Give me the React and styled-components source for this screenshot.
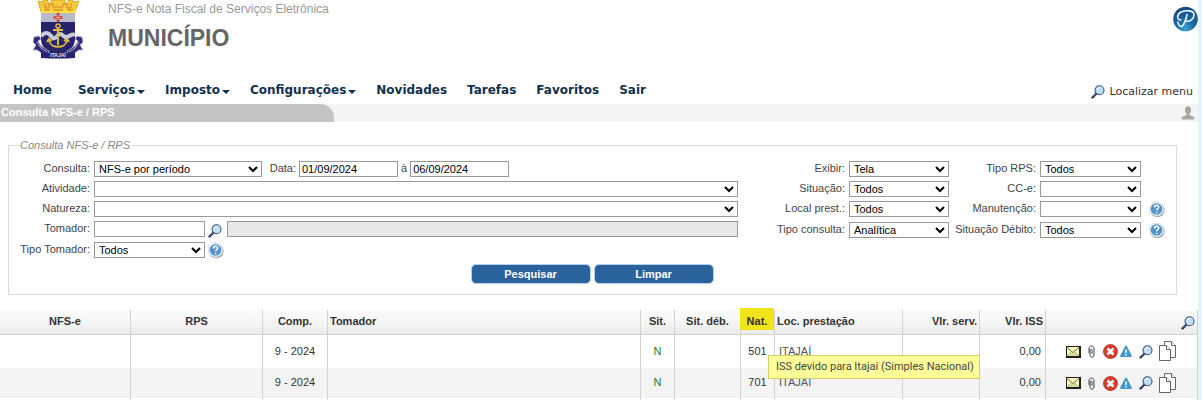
import React, { useState } from "react";
import styled, { createGlobalStyle } from "styled-components";

const GlobalStyle = createGlobalStyle`
  * {
    box-sizing: border-box;
  }

  body {
    margin: 0;
    background: #fff;
    color: #333;
    font-family: "Liberation Sans", Arial, sans-serif;
    font-size: 11px;
    line-height: 16px;
  }
`;

const Page = styled.div`
  height: 100vh;
  overflow: hidden;
  border-right: 4px solid #e3f4fe;
`;

const Header = styled.header`
  display: flex;
  height: 78px;
  padding-left: 32px;
`;

const Titles = styled.div`
  flex: 1;
  padding-left: 24px;
`;

const Subtitle = styled.div`
  color: #999;
  font-size: 12px;
  line-height: 18px;
`;

const Title = styled.h1`
  margin: 4px 0 0;
  color: #666;
  font-size: 23px;
  line-height: 32px;
`;

const BrandLink = styled.a`
  height: 26px;
  margin-top: 6px;
`;

const Nav = styled.nav`
  display: flex;
  align-items: center;
  gap: 20px;
  height: 26px;
  padding: 0 5px 2px 13px;
  font-family: "DejaVu Sans", Verdana, sans-serif;
`;

const NavLink = styled.a`
  display: flex;
  align-items: center;
  gap: 2px;
  color: #12314f;
  font-size: 12px;
  font-weight: bold;
  text-decoration: none;

  &:first-child {
    margin-right: 6px;
  }
`;

const Caret = styled.span`
  margin-top: 3px;
  border: 4px solid transparent;
  border-top-color: #12314f;
  border-bottom: 0;
`;

const FindMenu = styled.a`
  display: flex;
  align-items: center;
  gap: 4px;
  margin: 4px 0 0 auto;
  color: #333;
  font-size: 11px;
  text-decoration: none;
`;

const TitleBar = styled.div`
  display: flex;
  align-items: center;
  justify-content: space-between;
  height: 18px;
  padding-right: 3px;
  background: #f4f4f4;
`;

const Tab = styled.h2`
  width: 334px;
  margin: 0;
  padding: 0 0 2px 1px;
  border-top-right-radius: 14px;
  background: #c4c4c4;
  color: #fff;
  font-size: 11px;
  line-height: 16px;
`;

const Search = styled.form`
  padding: 16px 21px 15px 8px;
`;

const Fieldset = styled.fieldset`
  min-width: 0;
  margin: 0;
  padding: 9px 12px 10px 11px;
  border: 1px solid #d5dbe4;
`;

const Legend = styled.legend`
  padding: 0 2px 0 0;
  color: #888;
  font-style: italic;
  line-height: 14px;
`;

const Fields = styled.div`
  display: flex;
  gap: 4px;
`;

const LeftFields = styled.div`
  display: flex;
  flex: 1;
  flex-direction: column;
  gap: 4px;
`;

const RightFields = styled.div`
  display: grid;
  grid-template-columns: 103px 100px 83px 101px 20px;
  align-content: start;
  gap: 4px;
  margin-right: -1px;
`;

const FieldRow = styled.div`
  display: flex;
  align-items: flex-start;
  gap: 3px;
`;

const Label = styled.label`
  flex: none;
  width: ${(props) => props.$width || "auto"};
  color: #444;
  line-height: 15px;
  text-align: right;
  white-space: nowrap;
`;

const LeftLabel = styled(Label)`
  width: 70px;
  margin-right: 1px;
`;

const Select = styled.select`
  width: ${(props) => props.$width || "100%"};
  height: 16px;
  padding: 0;
  border: 1px solid #999;
  border-radius: 0;
  background-color: #fff;
  color: #000;
  font-family: inherit;
  font-size: 11px;
`;

const Input = styled.input`
  flex: ${(props) => (props.$width ? "none" : 1)};
  width: ${(props) => props.$width || "auto"};
  height: 16px;
  padding: 0 2px;
  border: 1px solid #999;
  background: #fff;
  color: #000;
  font-family: inherit;
  font-size: 11px;

  &:disabled {
    background: #e8e8e8;
  }
`;

const IconButton = styled.button`
  display: block;
  flex: none;
  width: ${(props) => props.$width || "16px"};
  padding: 0;
  border: 0;
  background: none;
  text-align: left;
  cursor: pointer;

  svg {
    display: block;
  }
`;

const FindButton = styled(IconButton)`
  width: 16px;
  padding-top: 3px;
`;

const HelpCell = styled.div`
  display: flex;
  justify-content: flex-end;
`;

const Buttons = styled.div`
  display: flex;
  justify-content: center;
  gap: 3px;
  padding-top: 5px;
`;

const Button = styled.button`
  width: 120px;
  height: 20px;
  padding: 0;
  border: 1px solid #b5d0ea;
  border-radius: 5px;
  background: #2a629c;
  color: #fff;
  font-family: inherit;
  font-size: 11px;
  font-weight: bold;
  cursor: pointer;
`;

const Table = styled.table`
  width: 100%;
  border-collapse: separate;
  border-spacing: 0;
  table-layout: fixed;
`;

const Col = styled.col`
  width: ${(props) => props.$width || "auto"};
`;

const Th = styled.th`
  position: relative;
  height: 25px;
  padding: 0 2px 2px;
  border-right: 1px solid #d2d2d2;
  border-bottom: 1px solid #d2d2d2;
  background: linear-gradient(#fbfbfb, #f6f6f6 45%, #ebebeb);
  line-height: 16px;
  text-align: ${(props) => props.$align || "center"};
  white-space: nowrap;
`;

const ToolsTh = styled(Th)`
  padding: 2px 2px 0;

  svg {
    display: block;
    margin-left: auto;
  }
`;

const Marker = styled.span`
  position: absolute;
  inset: -2px 0 4px -1px;
  display: flex;
  align-items: center;
  justify-content: center;
  padding-top: 4px;
  border-radius: 1px;
  background: #f2e41a;
`;

const Row = styled.tr`
  height: ${(props) => (props.$striped ? 30 : 33)}px;
  background: ${(props) => (props.$striped ? "#f3f3f3" : "#fff")};
`;

const Td = styled.td`
  position: relative;
  padding: 0 4px 2px;
  border-right: 1px solid #d2d2d2;
  color: ${(props) => props.$color || "#333"};
  line-height: 16px;
  text-align: ${(props) => props.$align || "center"};
  white-space: nowrap;
`;

const Tooltip = styled.div`
  position: absolute;
  top: 20px;
  left: -7px;
  z-index: 1;
  padding: 3px 5px 3px 7px;
  border: 1px solid #cfcf62;
  background: #ffff99;
  color: #444;
  font-family: Roboto, Arial, sans-serif;
`;

const Actions = styled.div`
  display: flex;
  align-items: center;
  gap: 2px;
  padding: 2px 0 0 16px;
`;

const Crest = () => (
  <svg width="52" height="59" viewBox="0 0 52 59" aria-hidden="true">
    <path
      d="M6 1l5 1V0h5v3h3V0h14v3h3V0h5v2l6-1-4 11H9z"
      fill="#f3cb3a"
      stroke="#c4941a"
      strokeWidth="0.7"
    />
    <path d="M13 3v5h4V4h4v3h10V4h4v4h4V3" fill="none" stroke="#d9822b" />
    <path d="M9 9h35l-1 4H10z" fill="#ffdf3d" />
    <path d="M12 10h6m3 0h10m4 0h6" stroke="#c8662b" />
    <path d="M9 13h34v26c0 10-9 15-17 17C18 54 9 49 9 39z" fill="#28246c" />
    <path d="M9 13h34v9H9z" fill="#b8bac7" />
    <path d="M26 13v9M21.500 17.500h9" stroke="#d73838" strokeWidth="2.600" />
    <path d="M26 15v5M23.500 17.500h5" stroke="#f6cfc7" strokeWidth="0.700" />
    <path
      d="M9 36c4-4 7-4 10 0s5 2 7-1c3-3 5 1 7 2 4 1 6-4 10-2"
      fill="none"
      stroke="#c9cbdc"
      strokeWidth="4"
    />
    <g fill="none" stroke="#d9ba42" strokeWidth="2">
      <circle cx="26" cy="26" r="2" strokeWidth="1.500" />
      <path d="M26 28v17M21 30h10M17 40c1 9 17 9 18 0M15 42l2-3 3 2M32 41l3-2 2 3" />
    </g>
    <path
      d="M2 37l5-1 2 3-3 2 3 5 8 5-3 5-9-6H1l3-5-3-3zM50 37l-5-1-2 3 3 2-3 5-8 5 3 5 9-6h4l-3-5 3-3z"
      fill="#302b78"
      stroke="#b7b7d6"
      strokeWidth="0.8"
    />
    <path d="M5 42l4 6 6 4M47 42l-4 6-6 4" fill="none" stroke="#d5d5ea" strokeWidth="0.800" />
    <path d="M9 52q17 2 34 0v6q-17 1-34 0z" fill="#28246c" />
    <text x="26" y="57" fill="#e3e3f0" fontSize="5" fontWeight="bold" textAnchor="middle">
      ITAJAÍ
    </text>
  </svg>
);

const BrandIcon = () => (
  <svg width="25" height="26" viewBox="0 0 25 26" aria-hidden="true">
    <defs>
      <radialGradient id="brand" cx="50%" cy="90%" r="85%">
        <stop offset="0" stopColor="#3aa6d6" />
        <stop offset="0.400" stopColor="#1c6ba4" />
        <stop offset="1" stopColor="#174a80" />
      </radialGradient>
    </defs>
    <circle cx="12.500" cy="13" r="12.300" fill="url(#brand)" />
    <path
      d="M9 20.500c2-2 4-7 5-12M8 14C3 14 4 8 8 6c5-2 13-2 13 3 0 4-4 7-8 6M5 16c0 3 2 5 4 4.500"
      fill="none"
      stroke="#e7f6ff"
      strokeWidth="1.600"
      strokeLinecap="round"
    />
  </svg>
);

const SearchIcon = () => (
  <svg width="14" height="14" viewBox="0 0 14 14" aria-hidden="true">
    <path d="M5.500 8.500L1.500 12.500" stroke="#26384f" strokeWidth="2.400" strokeLinecap="round" />
    <path d="M5 8.500L2 11.500" stroke="#7890ac" strokeWidth="0.700" />
    <circle cx="8.500" cy="5.200" r="4.500" fill="#bfdff6" stroke="#3d5878" strokeWidth="1.100" />
    <path d="M5.800 5c0-2 2-3.200 4.200-2.400-1 0-3 1-4.200 2.400z" fill="#fff" />
  </svg>
);

const HelpIcon = () => (
  <svg width="16" height="17" viewBox="0 0 16 17" aria-hidden="true">
    <circle cx="8.300" cy="9" r="7.300" fill="#a5a9ad" />
    <circle cx="7.500" cy="8" r="7.200" fill="#e8f1f8" stroke="#b9cede" strokeWidth="0.600" />
    <circle cx="7.500" cy="8" r="5.800" fill="#5594ca" />
    <path
      d="M5.500 6.500c0-3 4.200-2.800 4.200-.4 0 1.500-2 1.600-2 3.200M7.600 10.800v1.400"
      fill="none"
      stroke="#fff"
      strokeWidth="1.500"
    />
  </svg>
);

const UserIcon = () => (
  <svg width="14" height="14" viewBox="0 0 14 14" aria-hidden="true">
    <ellipse cx="7" cy="4" rx="3" ry="3.800" fill="#aaa6a6" />
    <path d="M5.500 6h3v3c2 1 5 1 5 4.500H.5C.5 10 3.500 10 5.500 9z" fill="#aaa6a6" />
  </svg>
);

const MailIcon = () => (
  <svg width="15" height="12" viewBox="0 0 15 12" aria-hidden="true">
    <path d="M0 0h15v12H0z" fill="#222" />
    <path d="M1 1h12v9H1z" fill="#ffffc4" />
    <path d="M1 10l4-4 2 1 2-1 4 4z" fill="#dcda98" />
    <path d="M1 1.500l6 5 6-5" fill="none" stroke="#55552f" strokeWidth="0.900" />
    <path d="M1 10l4-4M13 10L9 6" fill="none" stroke="#8a8a55" strokeWidth="0.600" />
  </svg>
);

const ClipIcon = () => (
  <svg width="10" height="13" viewBox="0 0 10 13" aria-hidden="true">
    <path
      d="M2 8V4c0-4 5-4 5 0v6c0 3-4 3-4 0V5c0-1 2-1 2 0v4"
      fill="none"
      stroke="#333"
      strokeWidth="0.900"
    />
  </svg>
);

const CancelIcon = () => (
  <svg width="15" height="15" viewBox="0 0 15 15" aria-hidden="true">
    <circle cx="7.500" cy="7.500" r="7" fill="#d43c2c" stroke="#b12c20" strokeWidth="0.800" />
    <path d="M4.500 4.500l6 6M10.500 4.500l-6 6" stroke="#fff" strokeWidth="2.600" />
  </svg>
);

const WarningIcon = () => (
  <svg width="12" height="13" viewBox="0 0 12 13" aria-hidden="true">
    <path d="M6 1.500l5 9.500H1z" fill="#4299ca" stroke="#4299ca" strokeWidth="1.800" strokeLinejoin="round" />
    <path d="M6 4.500v3.500M6 9v1.600" stroke="#fff" strokeWidth="1.500" />
  </svg>
);

const CopyIcon = () => (
  <svg width="18" height="21" viewBox="0 0 18 21" aria-hidden="true">
    <g fill="#fff" stroke="#666">
      <path d="M5.500.5h7l4 4v12h-11z" />
      <path d="M12.500.5v4h4" />
      <path d="M.5 4.500h7l4 4v11H.5z" />
      <path d="M7.500 4.500v4h4" />
    </g>
  </svg>
);

const menu = [
  { label: "Home" },
  { label: "Serviços", caret: true },
  { label: "Imposto", caret: true },
  { label: "Configurações", caret: true },
  { label: "Novidades" },
  { label: "Tarefas" },
  { label: "Favoritos" },
  { label: "Sair" },
];

const filters = [
  { id: "exibir", label: "Exibir:", value: "Tela" },
  { id: "tipo-rps", label: "Tipo RPS:", value: "Todos" },
  { id: "situacao", label: "Situação:", value: "Todos" },
  { id: "cce", label: "CC-e:", value: "" },
  { id: "local", label: "Local prest.:", value: "Todos" },
  { id: "manutencao", label: "Manutenção:", value: "", help: true },
  { id: "tipo-consulta", label: "Tipo consulta:", value: "Analítica" },
  { id: "situacao-debito", label: "Situação Débito:", value: "Todos", help: true },
];

const columns = [
  { label: "NFS-e", width: "131px" },
  { label: "RPS", width: "132px" },
  { label: "Comp.", width: "65px" },
  { label: "Tomador", align: "left" },
  { label: "Sit.", width: "34px" },
  { label: "Sit. déb.", width: "66px" },
  { label: "Nat.", width: "34px", marked: true },
  { label: "Loc. prestação", width: "128px", align: "left" },
  { label: "Vlr. serv.", width: "77px", align: "right" },
  { label: "Vlr. ISS", width: "66px", align: "right" },
];

const notes = [
  { comp: "9 - 2024", sit: "N", nat: "501", city: "ITAJAÍ", iss: "0,00" },
  { comp: "9 - 2024", sit: "N", nat: "701", city: "ITAJAÍ", iss: "0,00" },
];

const RowActions = () => (
  <Actions>
    <IconButton $width="19px" aria-label="Enviar e-mail">
      <MailIcon />
    </IconButton>
    <IconButton $width="14px" aria-label="Anexos">
      <ClipIcon />
    </IconButton>
    <IconButton $width="15px" aria-label="Cancelar">
      <CancelIcon />
    </IconButton>
    <IconButton $width="17px" aria-label="Avisos">
      <WarningIcon />
    </IconButton>
    <IconButton $width="18px" aria-label="Visualizar">
      <SearchIcon />
    </IconButton>
    <IconButton $width="18px" aria-label="Copiar">
      <CopyIcon />
    </IconButton>
  </Actions>
);

const SearchForm = () => {
  const [start, setStart] = useState("01/09/2024");
  const [end, setEnd] = useState("06/09/2024");

  return (
    <Search onSubmit={(e) => e.preventDefault()}>
      <Fieldset>
        <Legend>Consulta NFS-e / RPS</Legend>
        <Fields>
          <LeftFields>
            <FieldRow>
              <LeftLabel htmlFor="consulta">Consulta:</LeftLabel>
              <Select $width="168px" id="consulta">
                <option>NFS-e por período</option>
              </Select>
              <Label $width="31px" htmlFor="start">Data:</Label>
              <Input
                $width="99px"
                id="start"
                value={start}
                onChange={(e) => setStart(e.target.value)}
              />
              <Label htmlFor="end">à</Label>
              <Input
                $width="99px"
                id="end"
                value={end}
                onChange={(e) => setEnd(e.target.value)}
              />
            </FieldRow>
            <FieldRow>
              <LeftLabel htmlFor="atividade">Atividade:</LeftLabel>
              <Select id="atividade" />
            </FieldRow>
            <FieldRow>
              <LeftLabel htmlFor="natureza">Natureza:</LeftLabel>
              <Select id="natureza" />
            </FieldRow>
            <FieldRow>
              <LeftLabel htmlFor="tomador">Tomador:</LeftLabel>
              <Input $width="111px" id="tomador" />
              <FindButton type="button" aria-label="Buscar tomador">
                <SearchIcon />
              </FindButton>
              <Input disabled aria-label="Nome do tomador" />
            </FieldRow>
            <FieldRow>
              <LeftLabel htmlFor="tipo-tomador">Tipo Tomador:</LeftLabel>
              <Select $width="111px" id="tipo-tomador">
                <option>Todos</option>
              </Select>
              <IconButton type="button" aria-label="Ajuda">
                <HelpIcon />
              </IconButton>
            </FieldRow>
          </LeftFields>
          <RightFields>
            {filters.map((filter, index) => (
              <React.Fragment key={filter.id}>
                <Label htmlFor={filter.id}>{filter.label}</Label>
                <Select id={filter.id}>
                  {filter.value && <option>{filter.value}</option>}
                </Select>
                {index % 2 === 1 && (
                  <HelpCell>
                    {filter.help && (
                      <IconButton type="button" aria-label="Ajuda">
                        <HelpIcon />
                      </IconButton>
                    )}
                  </HelpCell>
                )}
              </React.Fragment>
            ))}
          </RightFields>
        </Fields>
        <Buttons>
          <Button type="submit">Pesquisar</Button>
          <Button type="reset">Limpar</Button>
        </Buttons>
      </Fieldset>
    </Search>
  );
};

const App = () => (
  <Page>
    <GlobalStyle />
    <Header>
      <Crest />
      <Titles>
        <Subtitle>NFS-e Nota Fiscal de Serviços Eletrônica</Subtitle>
        <Title>MUNICÍPIO</Title>
      </Titles>
      <BrandLink href="#" aria-label="Portal">
        <BrandIcon />
      </BrandLink>
    </Header>
    <Nav>
      {menu.map((item) => (
        <NavLink href="#" key={item.label}>
          {item.label}
          {item.caret && <Caret />}
        </NavLink>
      ))}
      <FindMenu href="#">
        <SearchIcon />
        Localizar menu
      </FindMenu>
    </Nav>
    <TitleBar>
      <Tab>Consulta NFS-e / RPS</Tab>
      <UserIcon />
    </TitleBar>
    <SearchForm />
    <Table>
      <colgroup>
        {columns.map((column) => (
          <Col key={column.label} $width={column.width} />
        ))}
        <Col $width="152px" />
      </colgroup>
      <thead>
        <tr>
          {columns.map((column) => (
            <Th key={column.label} $align={column.align}>
              {column.marked ? <Marker>{column.label}</Marker> : column.label}
            </Th>
          ))}
          <ToolsTh>
            <SearchIcon />
          </ToolsTh>
        </tr>
      </thead>
      <tbody>
        {notes.map((note, index) => (
          <Row key={note.nat} $striped={index % 2 === 1}>
            <Td />
            <Td />
            <Td>{note.comp}</Td>
            <Td />
            <Td $color="#2a7a2a">{note.sit}</Td>
            <Td />
            <Td>{note.nat}</Td>
            <Td $align="left" $color="#555">
              {note.city}
              {index === 0 && (
                <Tooltip role="tooltip">ISS devido para Itajaí (Simples Nacional)</Tooltip>
              )}
            </Td>
            <Td />
            <Td $align="right">{note.iss}</Td>
            <Td>
              <RowActions />
            </Td>
          </Row>
        ))}
        <Row>
          {[...columns, {}].map((column, index) => (
            <Td key={index} />
          ))}
        </Row>
      </tbody>
    </Table>
  </Page>
);

export default App;
